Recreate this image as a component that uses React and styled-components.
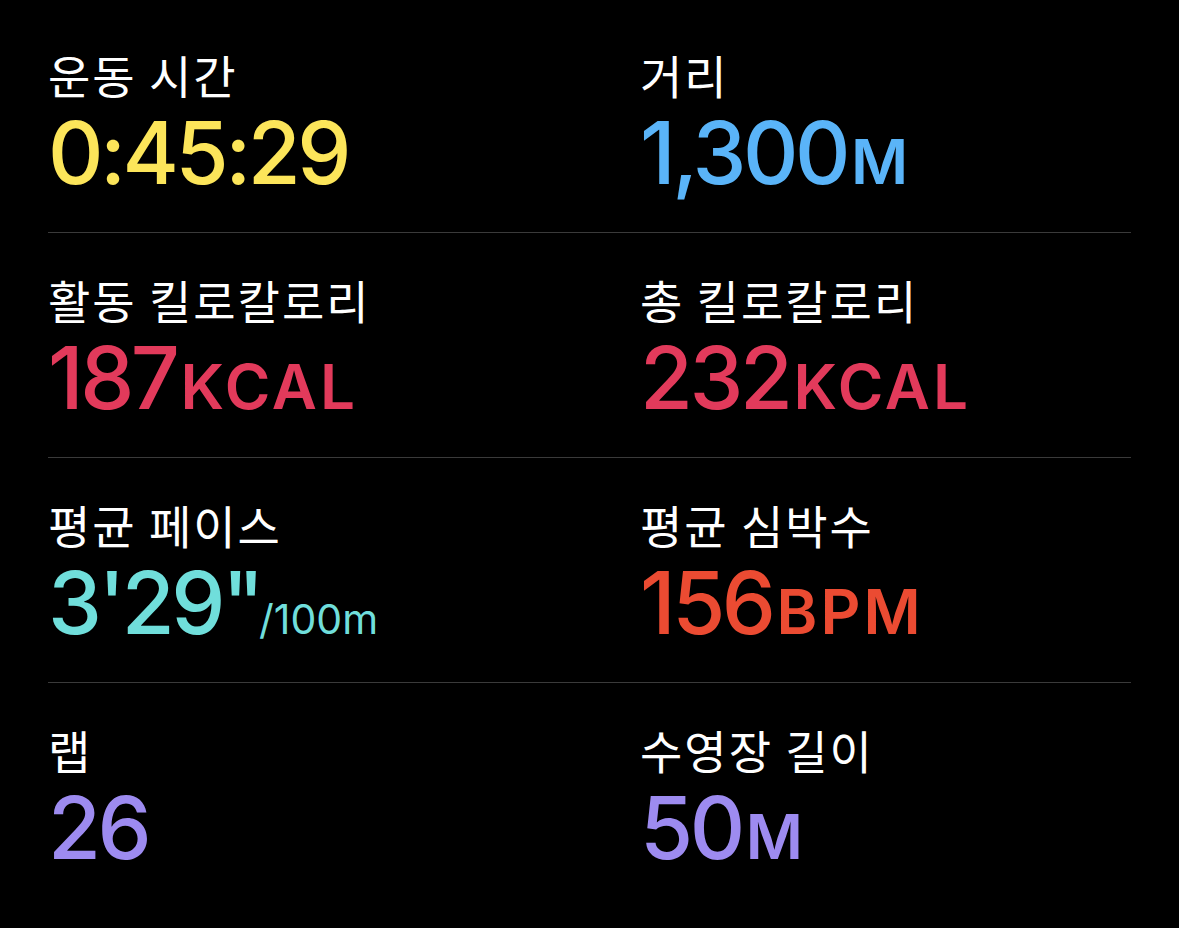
import React from 'react';
import styled, { createGlobalStyle } from 'styled-components';

const GlobalStyle = createGlobalStyle`
  html, body {
    margin: 0;
    padding: 0;
    background: #000;
  }
`;

const Page = styled.div`
  width: 1179px;
  height: 928px;
  box-sizing: border-box;
  padding: 8px 48px 0;
  background: #000;
`;

const Row = styled.div`
  display: grid;
  grid-template-columns: 592px 1fr;
  height: 225px;
  box-sizing: border-box;
  border-bottom: ${(p) => (p.$last ? 'none' : '1px solid #3a3a3a')};
`;

const Cell = styled.div`
  display: flex;
  flex-direction: column;
  padding-top: 36px;
`;

const Label = styled.div`
  font-family: "Noto Sans CJK KR", "Noto Sans", sans-serif;
  font-size: 46px;
  line-height: 60px;
  letter-spacing: 2px;
  color: #fff;
`;

const Value = styled.div`
  margin-top: 4px;
  font-family: Inter, "Noto Sans", sans-serif;
  font-weight: 500;
  font-size: 86px;
  line-height: 90px;
  letter-spacing: -3.5px;
  color: ${(p) => p.$color};
  white-space: nowrap;
`;

const Unit = styled.span`
  font-size: 62px;
  font-weight: 600;
  letter-spacing: 3px;
  margin-left: 4px;
`;

const Small = styled.span`
  font-size: 41px;
  font-weight: 400;
  letter-spacing: 0;
  margin-left: -2px;
`;

const rows = [
  [
    { label: '운동 시간', value: '0:45:29', color: '#FCE55A' },
    { label: '거리', value: '1,300', unit: 'M', color: '#5AB4F8' },
  ],
  [
    { label: '활동 킬로칼로리', value: '187', unit: 'KCAL', color: '#E23A5B' },
    { label: '총 킬로칼로리', value: '232', unit: 'KCAL', color: '#E23A5B' },
  ],
  [
    { label: '평균 페이스', value: '3\'29"', small: '/100m', color: '#70DEDB' },
    { label: '평균 심박수', value: '156', unit: 'BPM', color: '#EB4B32' },
  ],
  [
    { label: '랩', value: '26', color: '#9D8BF0' },
    { label: '수영장 길이', value: '50', unit: 'M', color: '#9D8BF0' },
  ],
];

export default function App() {
  return (
    <Page>
      <GlobalStyle />
      {rows.map((row, i) => (
        <Row key={i} $last={i === rows.length - 1}>
          {row.map((m) => (
            <Cell key={m.label}>
              <Label>{m.label}</Label>
              <Value $color={m.color}>
                {m.value}
                {m.unit && <Unit>{m.unit}</Unit>}
                {m.small && <Small>{m.small}</Small>}
              </Value>
            </Cell>
          ))}
        </Row>
      ))}
    </Page>
  );
}
